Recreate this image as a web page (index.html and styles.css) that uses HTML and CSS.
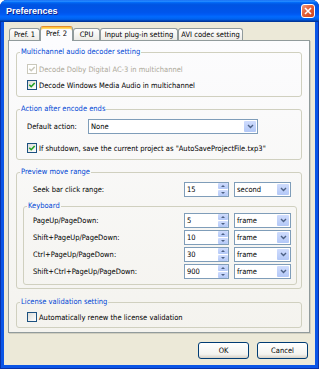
FILE: index.html
```html
<!DOCTYPE html>
<html lang="en">
<head>
  <meta charset="UTF-8" />
  <title>Preferences</title>
  <link rel="stylesheet" href="styles.css">
</head>
<body>
  <div class="window">
    <div class="titlebar">
      <span class="title">Preferences</span>
      <span class="close">
        <svg width="8" height="8" viewBox="0 0 8 8"><path d="M1 1 L7 7 M7 1 L1 7" stroke="#fff" stroke-width="1.6"/></svg>
      </span>
    </div>

    <div class="client">
      <div class="tabs">
        <div class="tab">Pref. 1</div>
        <div class="tab active">Pref. 2</div>
        <div class="tab">CPU</div>
        <div class="tab">Input plug-in setting</div>
        <div class="tab">AVI codec setting</div>
      </div>

      <div class="panel">
        <fieldset class="group">
          <legend>Multichannel audio decoder setting</legend>
          <div class="row disabled">
            <span class="cb">
              <svg width="8" height="8" viewBox="0 0 8 8"><polyline points="1.3,3.8 3.2,5.7 6.7,2" fill="none" stroke="#CAC8BB" stroke-width="1.6"/></svg>
            </span>
            Decode Dolby Digital AC-3 in multichannel
          </div>
          <div class="row">
            <span class="cb">
              <svg width="8" height="8" viewBox="0 0 8 8"><polyline points="1.3,3.8 3.2,5.7 6.7,2" fill="none" stroke="#21A121" stroke-width="1.6"/></svg>
            </span>
            Decode Windows Media Audio in multichannel
          </div>
        </fieldset>

        <fieldset class="group">
          <legend>Action after encode ends</legend>
          <div class="row">
            <span class="label-action">Default action:</span>
            <span class="select wide">None<span class="arrow"><svg width="7" height="5" viewBox="0 0 7 5"><polyline points="1,1 3.5,3.5 6,1" fill="none" stroke="#4D6185" stroke-width="1.4"/></svg></span></span>
          </div>
          <div class="row spaced">
            <span class="cb">
              <svg width="8" height="8" viewBox="0 0 8 8"><polyline points="1.3,3.8 3.2,5.7 6.7,2" fill="none" stroke="#21A121" stroke-width="1.6"/></svg>
            </span>
            If shutdown, save the current project as "AutoSaveProjectFile.txp3"
          </div>
        </fieldset>

        <fieldset class="group">
          <legend>Preview move range</legend>
          <div class="row seek">
            <span class="label">Seek bar click range:</span>
            <span class="spin">15<span class="btns"><span class="up"></span><span class="down"></span></span></span>
            <span class="select">second<span class="arrow"><svg width="7" height="5" viewBox="0 0 7 5"><polyline points="1,1 3.5,3.5 6,1" fill="none" stroke="#4D6185" stroke-width="1.4"/></svg></span></span>
          </div>

          <fieldset class="group keyboard">
            <legend>Keyboard</legend>
            <div class="row key">
              <span class="label">PageUp/PageDown:</span>
              <span class="spin">5<span class="btns"><span class="up"></span><span class="down"></span></span></span>
              <span class="select">frame<span class="arrow"><svg width="7" height="5" viewBox="0 0 7 5"><polyline points="1,1 3.5,3.5 6,1" fill="none" stroke="#4D6185" stroke-width="1.4"/></svg></span></span>
            </div>
            <div class="row key">
              <span class="label">Shift+PageUp/PageDown:</span>
              <span class="spin">10<span class="btns"><span class="up"></span><span class="down"></span></span></span>
              <span class="select">frame<span class="arrow"><svg width="7" height="5" viewBox="0 0 7 5"><polyline points="1,1 3.5,3.5 6,1" fill="none" stroke="#4D6185" stroke-width="1.4"/></svg></span></span>
            </div>
            <div class="row key">
              <span class="label">Ctrl+PageUp/PageDown:</span>
              <span class="spin">30<span class="btns"><span class="up"></span><span class="down"></span></span></span>
              <span class="select">frame<span class="arrow"><svg width="7" height="5" viewBox="0 0 7 5"><polyline points="1,1 3.5,3.5 6,1" fill="none" stroke="#4D6185" stroke-width="1.4"/></svg></span></span>
            </div>
            <div class="row key">
              <span class="label">Shift+Ctrl+PageUp/PageDown:</span>
              <span class="spin">900<span class="btns"><span class="up"></span><span class="down"></span></span></span>
              <span class="select">frame<span class="arrow"><svg width="7" height="5" viewBox="0 0 7 5"><polyline points="1,1 3.5,3.5 6,1" fill="none" stroke="#4D6185" stroke-width="1.4"/></svg></span></span>
            </div>
          </fieldset>
        </fieldset>

        <fieldset class="group license">
          <legend>License validation setting</legend>
          <div class="row">
            <span class="cb"></span>
            Automatically renew the license validation
          </div>
        </fieldset>
      </div>

      <div class="buttons">
        <button>OK</button>
        <button>Cancel</button>
      </div>
    </div>
  </div>
</body>
</html>
```

FILE: styles.css
```css
body {
  margin: 0;
  background: #fff;
  font-family: Tahoma, "DejaVu Sans Condensed", "Liberation Sans", sans-serif;
  font-size: 7.5px;
  color: #000;
}

.window {
  width: 319px;
  height: 369px;
  display: flex;
  flex-direction: column;
  background: #0A55E6;
  border-radius: 7px 7px 0 0;
  box-shadow: inset 1px 0 #0831A8, inset -1px 0 #0831A8, inset 0 -1px #0831A8;
}

.titlebar {
  height: 22px;
  flex: none;
  display: flex;
  align-items: center;
  justify-content: space-between;
  padding: 0 4px 0 6px;
  border-radius: 7px 7px 0 0;
  background: linear-gradient(#0058EE 0%, #3593FF 4%, #288EFF 6%, #127DFF 8%, #036FFC 10%, #0262EE 14%, #0057E5 20%, #0054E3 24%, #0055EB 56%, #005BF5 66%, #026AFE 76%, #0062EF 86%, #0052D6 92%, #0040AB 94%, #003092 100%);
}

.title {
  color: #fff;
  font: bold 9px "Liberation Sans", sans-serif;
  text-shadow: 1px 1px #0F1F89;
}

.close {
  width: 14px;
  height: 14px;
  box-sizing: border-box;
  border: 1px solid #fff;
  border-radius: 3px;
  background: linear-gradient(135deg, #F29A7C 0%, #E35F38 45%, #D0461F 100%);
  display: flex;
  align-items: center;
  justify-content: center;
}

.client {
  flex: 1;
  margin: 0 4px 4px;
  padding: 4px 5px 2px 4px;
  background: #ECE9D8;
  display: flex;
  flex-direction: column;
}

/* tabs */
.tabs {
  height: 14px;
  display: flex;
  align-items: flex-end;
  padding-left: 1px;
  position: relative;
  z-index: 1;
}

.tab {
  height: 12px;
  box-sizing: border-box;
  border: 1px solid #919B9C;
  border-bottom: none;
  border-radius: 3px 3px 0 0;
  background: linear-gradient(#FFFFFF, #ECEBE6);
  text-align: center;
  line-height: 11px;
  white-space: nowrap;
}

.tab:nth-child(1) { width: 31px; }
.tab:nth-child(2) { width: 33px; }
.tab:nth-child(3) { width: 27px; }
.tab:nth-child(4) { width: 78px; }
.tab:nth-child(5) { width: 65px; }

.tab.active {
  height: 15px;
  margin-bottom: -1px;
  border-top-color: #E68B2C;
  background: #FCFCFE;
  box-shadow: inset 0 1px #FFC73C, inset 0 2px #FFD86B;
  line-height: 14px;
}

.panel {
  flex: none;
  border: 1px solid #919B9C;
  background: linear-gradient(#FCFCFE, #F4F3EE);
  padding: 6px 7px 4px;
  box-shadow: 1px 1px 0 #D0CEBF;
}

/* group boxes */
.group {
  margin: 0;
  min-width: 0;
  padding: 4px 0 3px;
  border: 1px solid #D0D0BF;
  border-radius: 3px;
}

.group + .group { margin-top: 7px; }
.group.license { margin-top: 8px; }

legend {
  margin-left: 3px;
  padding: 0 1px;
  height: 10px;
  line-height: 10px;
  color: #0046D5;
}

.row {
  height: 16px;
  display: flex;
  align-items: center;
  padding-left: 10px;
  white-space: nowrap;
}

.row.spaced { margin-top: 6px; }
.row.disabled { color: #ACA899; }

.cb {
  flex: none;
  width: 10px;
  height: 10px;
  box-sizing: border-box;
  margin-right: 2px;
  border: 1px solid #1C5180;
  background: linear-gradient(135deg, #DCDCD7, #FFFFFF);
  display: flex;
  align-items: center;
  justify-content: center;
}

.row.disabled .cb {
  border-color: #CAC8BB;
  background: #fff;
}

.label-action { width: 61px; }

.label { flex: 1; }

.select {
  flex: none;
  width: 57px;
  height: 15px;
  box-sizing: border-box;
  border: 1px solid #7F9DB9;
  background: #fff;
  padding-left: 2px;
  display: flex;
  align-items: center;
  justify-content: space-between;
}

.select.wide { width: 170px; }

.arrow {
  width: 12px;
  height: 11px;
  margin-right: 1px;
  border-radius: 1px;
  background: linear-gradient(#CFDCFD, #B3C8F7);
  display: flex;
  align-items: center;
  justify-content: center;
}

.spin {
  flex: none;
  width: 45px;
  height: 15px;
  box-sizing: border-box;
  margin-right: 5px;
  border: 1px solid #7F9DB9;
  background: #fff;
  padding-left: 2px;
  display: flex;
  align-items: center;
  justify-content: space-between;
}

.btns {
  width: 10px;
  height: 13px;
  display: flex;
  flex-direction: column;
  gap: 1px;
}

.btns span {
  flex: 1;
  border-radius: 1px;
  background: linear-gradient(#CFDCFD, #B3C8F7);
  display: flex;
  align-items: center;
  justify-content: center;
}

.btns .up::after,
.btns .down::after {
  content: "";
  border-left: 2px solid transparent;
  border-right: 2px solid transparent;
}

.btns .up::after { border-bottom: 2px solid #4D6185; }
.btns .down::after { border-top: 2px solid #4D6185; }

.row.seek {
  padding-left: 16px;
  padding-right: 10px;
}

.keyboard {
  margin: 4px 4px 0 6px;
  padding: 1px 0 4px;
}

.row.key {
  height: 17px;
  padding-left: 9px;
  padding-right: 5px;
}

.group.license { padding: 2px 0 2px; }

/* dialog buttons */
.buttons {
  display: flex;
  justify-content: flex-end;
  gap: 8px;
  margin-top: 9px;
  padding-right: 2px;
}

button {
  width: 51px;
  height: 17px;
  padding: 0;
  border: 1px solid #003C74;
  border-radius: 3px;
  background: linear-gradient(#FFFFFF, #F3F3EF 75%, #D6D0C5);
  font: inherit;
  color: #000;
}
```
